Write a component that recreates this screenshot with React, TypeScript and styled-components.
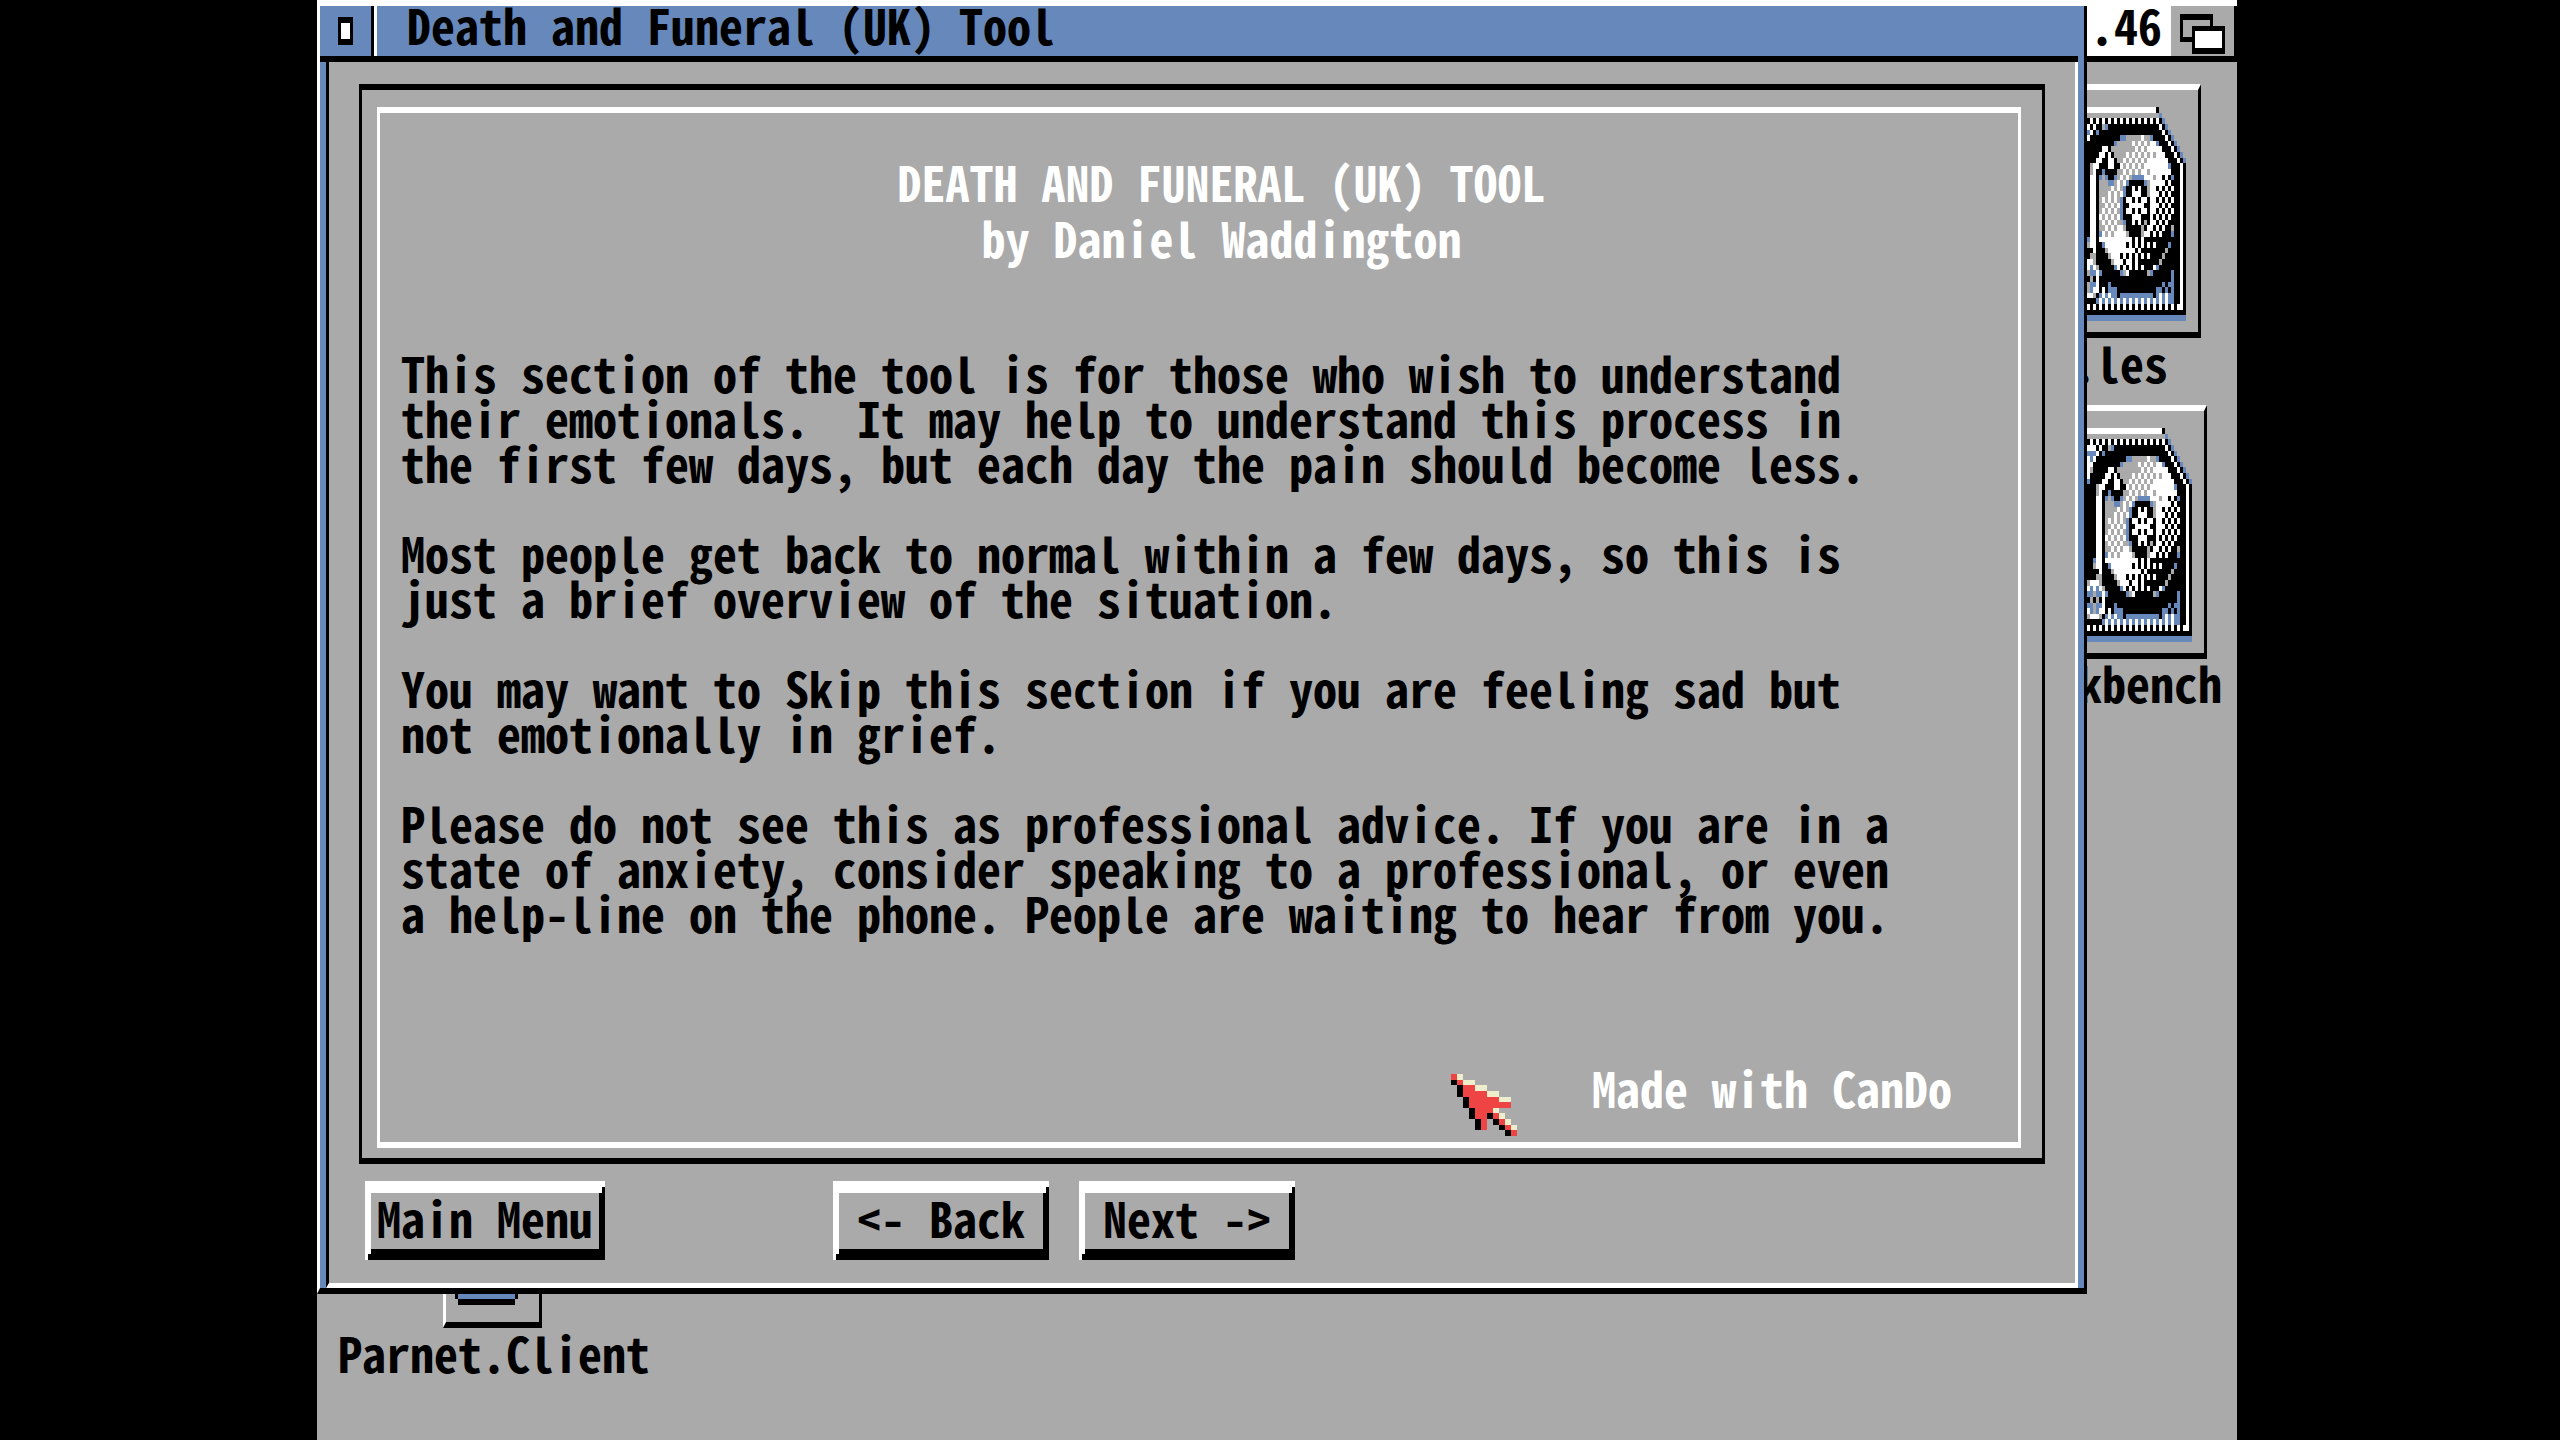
import React from 'react';
import styled, { createGlobalStyle } from 'styled-components';

const grey = '#aaaaaa';
const blue = '#6688bb';
const black = '#000000';
const white = '#ffffff';

const GlobalStyle = createGlobalStyle`
  * { box-sizing: border-box; margin: 0; padding: 0; }
  body {
    background: ${black};
    color: ${black};
    font-family: "Noto Sans Mono CJK JP", "Noto Sans Mono CJK SC", "Noto Sans CJK JP", monospace;
    font-feature-settings: "hwid";
    font-size: 48px;
    font-weight: 700;
  }
`;

const Screen = styled.div`
  position: relative;
  margin: 0 323px 0 317px;
  min-height: 100vh;
  overflow: hidden;
  background: ${grey};
  border-top: 6px solid ${white};
`;

const ScreenBar = styled.header`
  display: flex;
  justify-content: flex-end;
  height: 56px;
  background: ${white};
  border-bottom: 6px solid ${black};
`;

const Version = styled.span`
  padding-right: 9px;
  line-height: 36px;
`;

const ScreenDepth = styled.button`
  width: 66px;
  height: 50px;
  padding: 5px 0 0 9px;
  background: ${grey};
  border: 0;
  border-right: 3px solid ${black};
`;

const DepthArt = styled.svg`
  display: block;
`;

const DesktopIcon = styled.div<{ $top: number; $right: number }>`
  position: absolute;
  top: ${p => p.$top}px;
  right: ${p => p.$right}px;
  display: flex;
  flex-direction: column;
`;

const IconFrame = styled.div<{ $width: number; $height: number }>`
  display: flex;
  justify-content: flex-end;
  align-self: center;
  width: ${p => p.$width}px;
  height: ${p => p.$height}px;
  padding: 17px 12px 0 0;
  border: solid;
  border-width: 6px 3px;
  border-color: ${white} ${black} ${black} ${white};
`;

const IconLabel = styled.span`
  line-height: 48px;
  white-space: pre;
`;

const Window = styled.main`
  position: absolute;
  top: 0;
  left: 0;
  right: 150px;
  background: ${blue};
  border: solid;
  border-width: 0 3px 6px;
  border-color: ${black} ${black} ${black} ${white};
`;

const TitleBar = styled.div`
  display: flex;
  height: 56px;
  margin-right: 6px;
  border-bottom: 6px solid ${black};
`;

const CloseButton = styled.button`
  display: flex;
  width: 54px;
  height: 50px;
  padding: 11px 0 0 18px;
  background: ${blue};
  border: 0;
  border-right: 3px solid ${black};
`;

const CloseMark = styled.span`
  width: 15px;
  height: 28px;
  background: ${white};
  border: solid ${black};
  border-width: 6px 3px;
`;

const Title = styled.h1`
  flex: 1;
  padding-left: 30px;
  border-left: 3px solid ${white};
  font-size: 48px;
  line-height: 36px;
  white-space: pre;
`;

const Pane = styled.div`
  margin: 0 6px;
  padding: 22px 30px 23px;
  background: ${grey};
  border: solid;
  border-width: 0 3px 5px;
  border-color: ${white} ${white} ${white} ${black};
`;

const OuterFrame = styled.section`
  padding: 17px 21px 10px 15px;
  border: solid ${black};
  border-width: 6px 3px;
`;

const InnerFrame = styled.div`
  padding: 40px 66px 27px 21px;
  border: solid ${white};
  border-width: 6px 3px;
`;

const Heading = styled.div`
  padding-left: 90px;
  color: ${white};
  line-height: 56px;
  text-align: center;
`;

const HeadingLine = styled.h2`
  font-size: 48px;
`;

const Copy = styled.div`
  display: flex;
  flex-direction: column;
  gap: 45px;
  margin: 85px 0 124px;
  line-height: 45px;
  white-space: pre;
`;

const Credit = styled.p`
  color: ${white};
  line-height: 56px;
  text-align: right;
`;

const ButtonRow = styled.nav`
  display: flex;
  gap: 30px;
  margin-top: 17px;
  padding-left: 6px;
`;

const PushButton = styled.button<{ $wide?: boolean }>`
  width: ${p => (p.$wide ? 240 : 216)}px;
  height: 79px;
  margin-right: ${p => (p.$wide ? 198 : 0)}px;
  padding-bottom: 8px;
  background: ${grey};
  border: 0;
  box-shadow:
    inset 0 6px ${white},
    inset 3px 0 ${white},
    inset -3px 0 ${black},
    inset 0 -6px ${black},
    inset 0 12px ${white},
    inset 6px 0 ${white},
    inset -6px 0 ${black},
    inset 0 -11px ${black};
  color: ${black};
  font: inherit;
  font-feature-settings: inherit;
  line-height: 56px;
`;

const PointerArt = styled.div`
  position: absolute;
  top: 1068px;
  left: 1134px;
`;

const Parnet = styled.div`
  position: absolute;
  top: 1254px;
  left: 21px;
  display: flex;
  flex-direction: column;
`;

const ParnetFrame = styled.div`
  width: 99px;
  height: 68px;
  margin-left: 105px;
  padding: 28px 9px 0;
  border: solid;
  border-width: 0 3px 6px;
  border-color: ${white} ${black} ${black} ${white};
`;

const palette: Record<string, string> = {
  W: white,
  K: black,
  B: blue,
  G: grey,
  R: '#ee4444',
  C: '#eeeecc',
};

/*
 * Each row is a list of runs. A run is a colour pattern and the column it stops
 * before; "WK20" alternates white and black up to column 20. "." is see-through.
 */
const pointerRows = [
  'R1 C2',
  'K1 R2 C4',
  '.1 K2 R4 C6',
  '.1 K2 R6 C8',
  '.2 K3 R8 C10',
  '.2 K3 R10',
  '.3 K4 R7 C8',
  '.3 K4 R6 K7 R8 C9',
  '.4 K5 R6 .7 K8 R9 C10',
  '.4 K5 R6 .8 K9 R10 C11',
  '.9 K10 R11',
];

const driveRows = [
  'W25 K26',
  '.26 B27',
  'KW26 K27 B28',
  'W3 K4 W5 K7 G8 B9 K26 W27 K28 B29',
  'B3 W4 K5 B6 K27 W28 K29 B30',
  'W1 B2 W3 K13 B15 G20 W21 G23 B24 K28 W29 K30 B31',
  'W2 K11 B12 G17 WG23 W25 B26 K29 W30 K31 B32',
  'W1 G2 K7 W9 K10 G18 WG22 W27 K30 W31 K32 B33',
  'W1 K6 W8 K9 W10 K11 G15 WG25 W28 K31 W32 K33 B34',
  'B1 K5 W7 K9 W11 K12 G14 WG22 W29 K32 W33 K34 B35',
  'K3 G4 W6 K9 W11 K13 WG22 W29 B30 K33 W34 K35',
  'K3 G4 W5 K7 B8 K12 G14 WG20 W22 G23 W30 K33 W34 K35',
  'K3 W5 K6 B7 G8 B9 K11 B12 G13 WG17 B21 W24 G25 W27 K28 W29 K30 B31 K33 W34 K35',
  'K3 W5 K6 G9 B11 G12 WG15 B16 K21 B22 G23 W28 K29 W30 K33 W34 K35',
  'K3 W5 K6 G10 WG14 B15 K17 W18 K19 W20 K22 G23 W25 K26 WK31 K33 W34 K35',
  'K3 W5 K6 G9 WG14 B15 K17 W20 K22 G23 W26 K27 W28 K29 W30 K33 W34 K35',
  'K3 W5 K6 G7 WG13 B14 K15 W17 K18 W19 K20 W22 K23 W25 K26 WK31 K33 W34 K35',
  'K3 W5 K6 G8 WG13 B14 K16 W21 K23 W26 K27 W28 K29 W30 K33 W34 K35',
  'K3 W5 K6 G7 WG13 B14 K15 W17 K18 W19 K20 W22 K23 W25 K26 WK31 K33 W34 K35',
  'K3 W5 K6 WG13 B14 K17 W20 K23 W24 K25 W26 K27 W28 K29 W30 K33 W34 K35',
  'K3 W5 K6 G7 WG12 G14 B15 K17 W18 K19 W20 K21 G22 K23 W25 K26 W27 K28 W29 K33 W34 K35',
  'K3 W5 K6 G8 WG12 W14 G15 K20 G21 K22 W24 K25 W26 K27 W28 K30 G31 K33 W34 K35',
  'K3 W5 K6 B7 W8 G9 W10 G11 W15 G16 K20 G21 W23 K24 W25 K26 W27 K30 B31 K33 W34 K35',
  'K2 B3 W5 K6 W17 K18 W19 K20 W21 K33 W34 K35',
  'K2 G3 W5 K7 B8 W15 KW25 K29 B30 K33 W34 K35',
  'K4 W5 K8 G9 W18 K19 W20 K28 G29 K33 W34 K35',
  'K3 G5 K9 G10 W13 KW23 K27 G28 K33 W34 K35',
  'G1 W4 G5 K10 G11 W14 K15 W17 K18 W19 K26 G27 K33 W34 K35',
  'W1 B2 W3 B4 W5 G6 K11 B12 W13 KW21 K24 W25 B26 K33 W34 K35',
  'B2 G3 B5 W6 B7 K13 B14 G15 W16 K22 G23 B24 K30 B31 K33 W34 K35',
  'KG5 W6 K30 B31 K33 W34 K35',
  'B2 G3 B5 W6 K9 B10 K27 B28 K29 B31 K33 W34 K35',
  'W1 B2 G3 B4 W6 K7 W8 K9 B12 K25 B27 K28 B29 K30 B31 K33 W34 K35',
  'G1 W4 G5 K6 B7 W8 B9 W10 B12 K13 B24 K25 B26 W27 B28 W29 B31 K33 W34 K35',
  'K5 B6 WB29 B31 K33 W34 K35',
  'WK32 W34 K35',
  'K35',
  'B35',
];

function PixelArt({ rows, columns, unit, label }: { rows: string[]; columns: number; unit: number; label: string }) {
  const cells: React.ReactElement[] = [];
  rows.forEach((row, y) => {
    let x = 0;
    row.split(' ').forEach(run => {
      const pattern = run.replace(/\d/g, '');
      const end = Number(run.replace(/\D/g, ''));
      if (pattern.length === 1) {
        if (pattern !== '.') {
          cells.push(<rect key={`${x}-${y}`} x={x} y={y} width={end - x} height={1} fill={palette[pattern]} />);
        }
      } else {
        for (let c = x; c < end; c += 1) {
          const colour = palette[pattern[(c - x) % pattern.length]];
          cells.push(<rect key={`${c}-${y}`} x={c} y={y} width={1} height={1} fill={colour} />);
        }
      }
      x = end;
    });
  });
  return (
    <svg
      role="img"
      aria-label={label}
      width={columns * unit}
      height={Math.round((rows.length * 45) / 8)}
      viewBox={`0 0 ${columns} ${rows.length}`}
      preserveAspectRatio="none"
      shapeRendering="crispEdges"
      style={{ display: 'block', flexShrink: 0 }}
    >
      {cells}
    </svg>
  );
}

const paragraphs = [
  'This section of the tool is for those who wish to understand\ntheir emotionals.  It may help to understand this process in\nthe first few days, but each day the pain should become less.',
  'Most people get back to normal within a few days, so this is\njust a brief overview of the situation.',
  'You may want to Skip this section if you are feeling sad but\nnot emotionally in grief.',
  'Please do not see this as professional advice. If you are in a\nstate of anxiety, consider speaking to a professional, or even\na help-line on the phone. People are waiting to hear from you.',
];

export default function App() {
  return (
    <>
      <GlobalStyle />
      <Screen>
        <ScreenBar>
          <Version>.46</Version>
          <ScreenDepth aria-label="Screen depth">
            <DepthArt width="45" height="40" viewBox="0 0 45 40" shapeRendering="crispEdges">
              <path fill={black} d="M0 0h33v28H0z" />
              <path fill={grey} d="M3 6h27v17H3z" />
              <path fill={black} d="M12 12h33v28H12z" />
              <path fill={white} d="M15 17h27v17H15z" />
            </DepthArt>
          </ScreenDepth>
        </ScreenBar>

        <DesktopIcon $top={78} $right={36}>
          <IconFrame $width={180} $height={254}>
            <PixelArt rows={driveRows} columns={35} unit={3} label="Hard drive" />
          </IconFrame>
        </DesktopIcon>
        <DesktopIcon $top={332} $right={69}>
          <IconLabel>.les</IconLabel>
        </DesktopIcon>

        <DesktopIcon $top={399} $right={30}>
          <IconFrame $width={180} $height={254}>
            <PixelArt rows={driveRows} columns={35} unit={3} label="Hard drive" />
          </IconFrame>
        </DesktopIcon>
        <DesktopIcon $top={652} $right={15}>
          <IconLabel>kbench</IconLabel>
        </DesktopIcon>

        <Parnet>
          <ParnetFrame>
            <svg width="63" height="17" viewBox="0 0 63 17" shapeRendering="crispEdges" style={{ display: 'block' }}>
              <path fill={black} d="M0 0h63v11H0z" />
              <path fill={blue} d="M3 0h57v11H3z" />
              <path fill={black} d="M3 11h57v6H3z" />
            </svg>
          </ParnetFrame>
          <IconLabel>Parnet.Client</IconLabel>
        </Parnet>

        <Window>
          <TitleBar>
            <CloseButton aria-label="Close window">
              <CloseMark />
            </CloseButton>
            <Title>Death and Funeral (UK) Tool</Title>
          </TitleBar>
          <Pane>
            <OuterFrame>
              <InnerFrame>
                <Heading>
                  <HeadingLine>DEATH AND FUNERAL (UK) TOOL</HeadingLine>
                  <p>by Daniel Waddington</p>
                </Heading>
                <Copy>
                  {paragraphs.map(text => (
                    <p key={text}>{text}</p>
                  ))}
                </Copy>
                <Credit>Made with CanDo</Credit>
              </InnerFrame>
            </OuterFrame>
            <ButtonRow>
              <PushButton $wide>Main Menu</PushButton>
              <PushButton>{'<- Back'}</PushButton>
              <PushButton>{'Next ->'}</PushButton>
            </ButtonRow>
          </Pane>
        </Window>

        <PointerArt>
          <PixelArt rows={pointerRows} columns={11} unit={6} label="Pointer" />
        </PointerArt>
      </Screen>
    </>
  );
}
